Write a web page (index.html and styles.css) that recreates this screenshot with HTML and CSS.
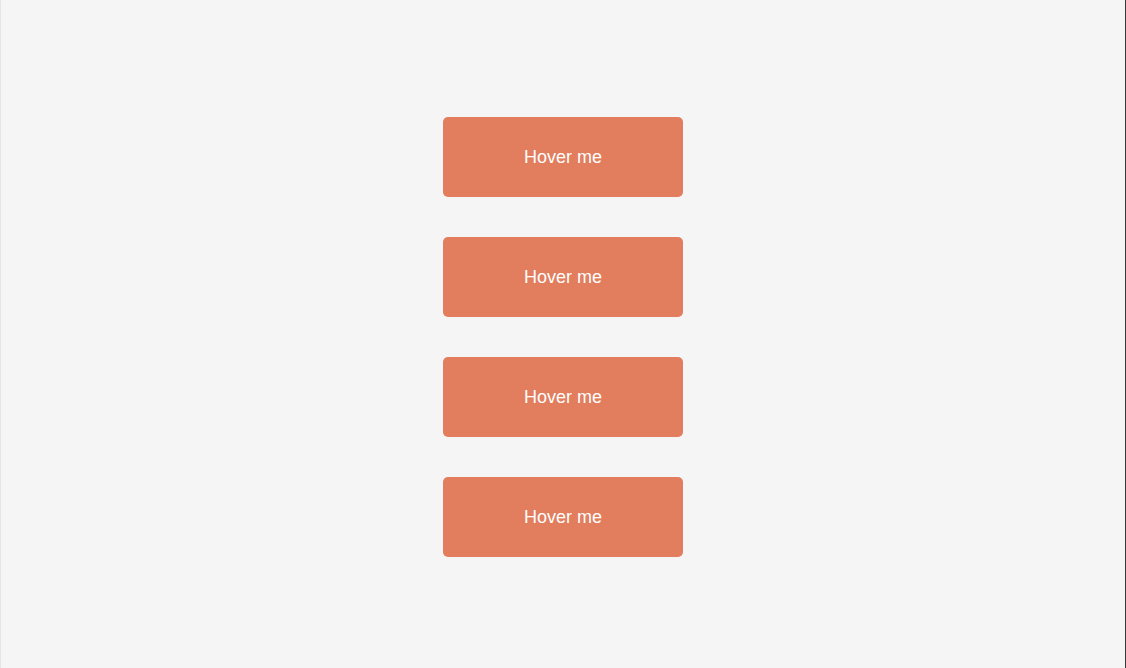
FILE: index.html
```html
<!DOCTYPE html>
<html>
<head>
<meta charset="utf-8">
<link rel="stylesheet" href="styles.css">
</head>
<body>
<main class="stack">
  <button class="btn">Hover me</button>
  <button class="btn">Hover me</button>
  <button class="btn">Hover me</button>
  <button class="btn">Hover me</button>
</main>
</body>
</html>
```
FILE: styles.css
```css
html, body {
  margin: 0;
  padding: 0;
}
body {
  box-sizing: border-box;
  width: 1126px;
  height: 668px;
  background: #f5f5f5;
  border-left: 1px solid #e4e4e4;
  border-right: 1px solid #3a3a3a;
  overflow: hidden;
  font-family: "Liberation Sans", Arial, sans-serif;
}
.stack {
  display: flex;
  flex-direction: column;
  align-items: center;
  gap: 40px;
  padding-top: 117px;
}
.btn {
  width: 240px;
  height: 80px;
  border: none;
  border-radius: 5px;
  background: #e27d5d;
  color: #ffffff;
  font-family: "Liberation Sans", Arial, sans-serif;
  font-size: 18px;
  padding: 0;
  cursor: pointer;
}
```
